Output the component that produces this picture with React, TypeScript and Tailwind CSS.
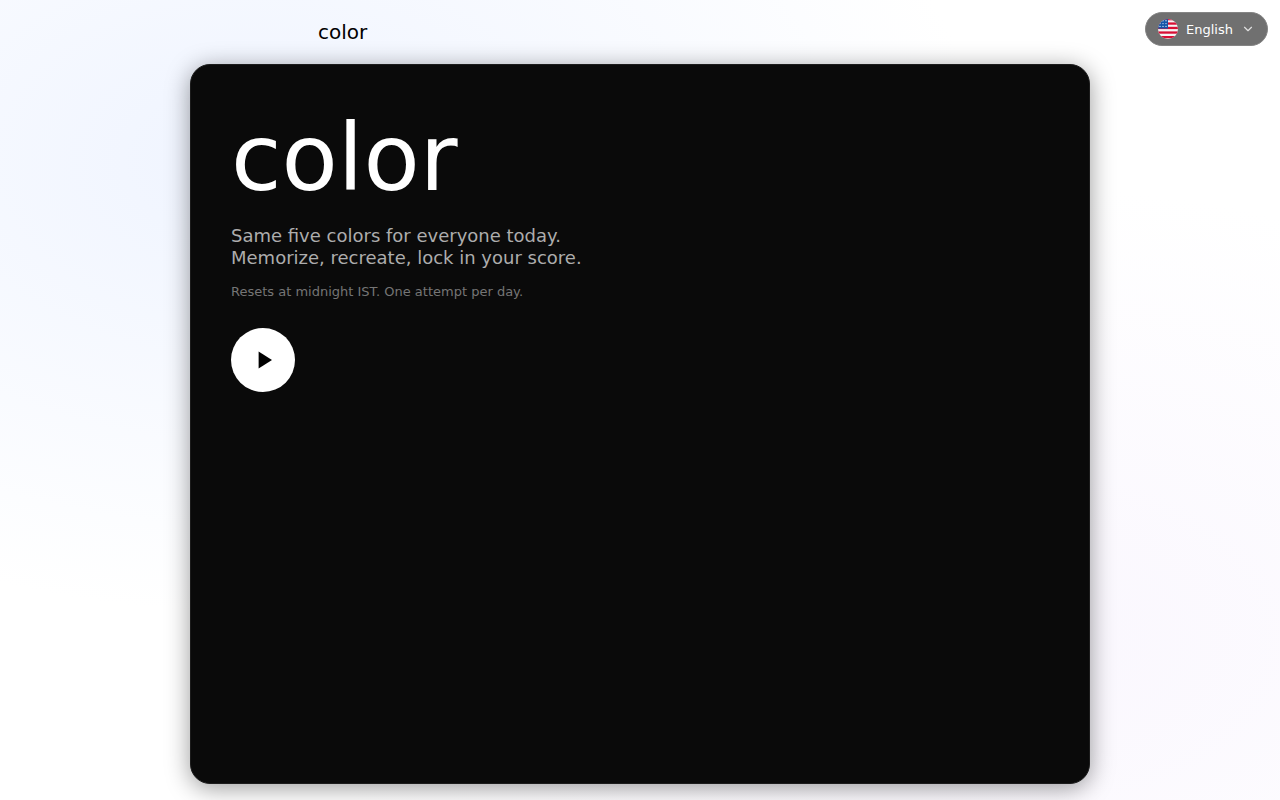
import { ChevronDown } from "lucide-react";

// ── Flag ──────────────────────────────────────────────────────────────────────

const RED_STRIPES = [-1, 3.4, 7.8, 12.4, 17];
const STAR_ROWS = [1.8, 4.6, 7.4];
const STAR_COLS = [2, 5, 8];

function UsFlag() {
  return (
    <svg viewBox="0 0 20 20" className="size-5 shrink-0 rounded-full" aria-hidden="true">
      <rect width="20" height="20" fill="#f5f5f5" />
      {RED_STRIPES.map((y) => (
        <rect key={y} y={y} width="20" height="2.3" fill="#d80f35" />
      ))}
      <rect width="10" height="9.6" fill="#1456a8" />
      {STAR_ROWS.map((y) =>
        STAR_COLS.map((x) => <circle key={`${x}-${y}`} cx={x} cy={y} r="0.7" fill="#d5e4f5" />)
      )}
    </svg>
  );
}

// ── Language picker ───────────────────────────────────────────────────────────

function LanguagePicker() {
  return (
    <div className="fixed top-3 right-3 z-10 flex h-[34px] items-center gap-2 rounded-full border border-[#858585] bg-[#707070] px-3 text-white">
      <UsFlag />
      <select
        aria-label="Language"
        defaultValue="en"
        className="-mr-7 cursor-pointer appearance-none bg-transparent pt-px pr-7 text-[13px] leading-5 text-white outline-none"
      >
        <option value="en">English</option>
      </select>
      <ChevronDown className="pointer-events-none size-3.5 text-[#e0e0e0]" strokeWidth={2} />
    </div>
  );
}

// ── Page ──────────────────────────────────────────────────────────────────────

export default function App() {
  return (
    <div className="min-h-screen bg-white bg-[radial-gradient(ellipse_at_20%_20%,#eff4ff_0%,transparent_50%),radial-gradient(ellipse_at_80%_80%,#faf7fe_0%,transparent_50%)] pb-4 font-['DejaVu_Sans',sans-serif]">
      <LanguagePicker />

      <header className="mx-auto flex h-16 max-w-[900px] items-center px-32">
        <a href="#" className="text-xl leading-6 text-black">color</a>
      </header>

      <main className="mx-auto flex min-h-[calc(100vh-80px)] max-w-[900px] flex-col items-start rounded-[20px] border border-[#1c1c1c] bg-[#0a0a0a] p-10 shadow-[0_4px_24px_rgba(0,0,0,0.4)]">
        <h1 className="text-[92px] leading-[108px] text-white">color</h1>
        <p className="mt-3 text-lg leading-[22px] text-[#adadad]">
          Same five colors for everyone today.
          <br />
          Memorize, recreate, lock in your score.
        </p>
        <p className="mt-3 text-[13px] leading-[22px] text-[#757575]">
          Resets at midnight IST. One attempt per day.
        </p>
        <button
          type="button"
          aria-label="Play"
          className="mt-[25px] flex size-16 cursor-pointer items-center justify-center rounded-full bg-white text-black"
        >
          <svg viewBox="0 0 24 24" className="size-6" fill="currentColor" aria-hidden="true">
            <path d="M7.6 3.5v17L21 12z" />
          </svg>
        </button>
      </main>
    </div>
  );
}
